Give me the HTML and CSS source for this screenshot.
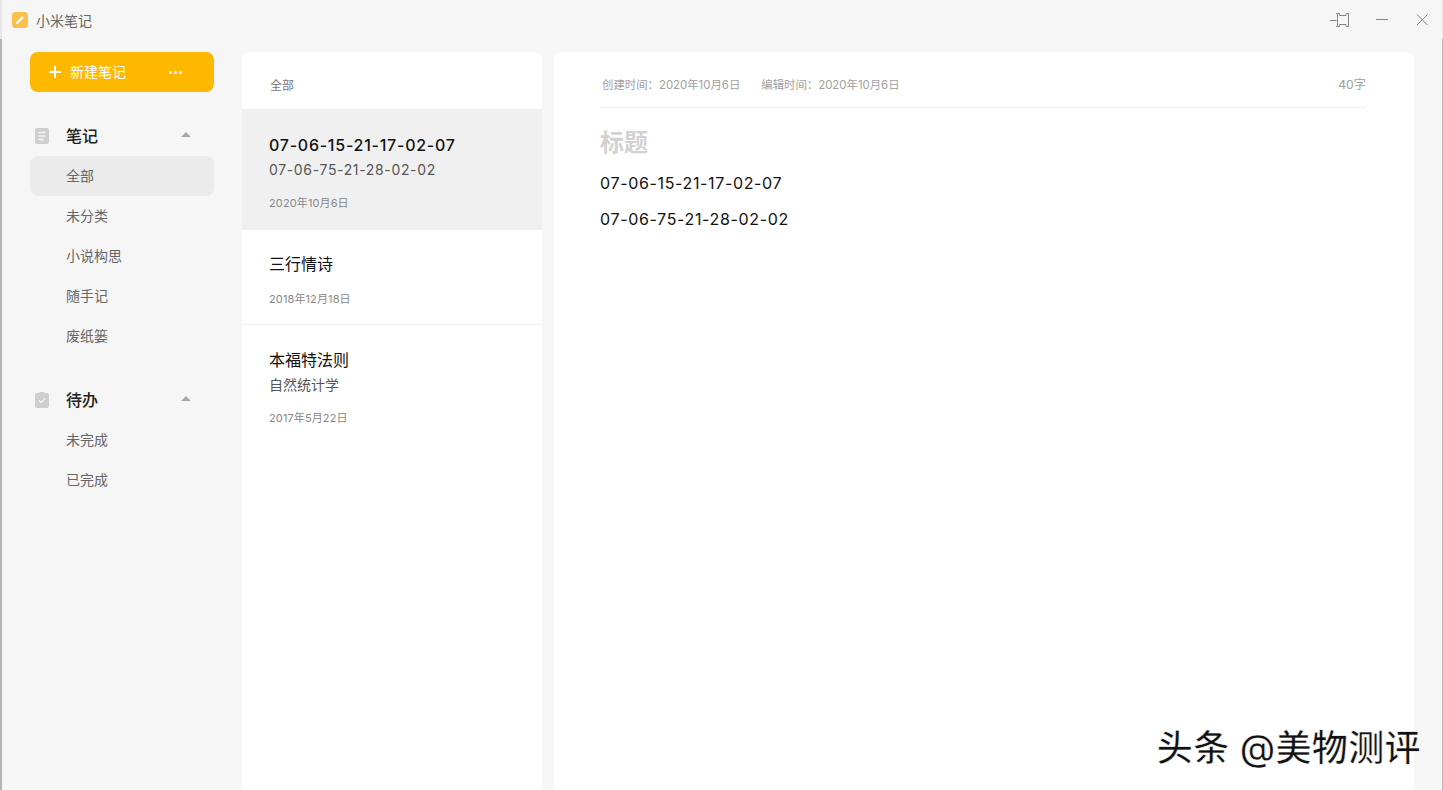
FILE: index.html
```html
<!DOCTYPE html>
<html lang="zh-CN">
<head>
    <meta charset="UTF-8">
    <meta name="viewport" content="width=device-width, initial-scale=1.0">
    <title>小米笔记</title>
    <link rel="stylesheet" href="styles.css">
</head>
<body>
    <div class="window">
        <header class="titlebar">
            <div class="app-name">
                <svg class="app-logo" width="16" height="16" viewBox="0 0 16 16">
                    <rect width="16" height="16" rx="3.5" fill="#fbc04a"/>
                    <path d="M4.5 11.5 L11 5" stroke="#fff" stroke-width="2.4" fill="none"/>
                </svg>
                <span>小米笔记</span>
            </div>
            <div class="window-btns">
                <svg width="20" height="16" viewBox="0 0 20 16" fill="none" stroke="#858585" stroke-width="1">
                    <path d="M1 8.5 H7.5 M7.5 1.5 H10.5 V3.5 H17 V1.5 H19.5 V14.5 H17 V12.5 H10.5 V14.5 H7.5 L8.5 13 V3 Z"/>
                </svg>
                <svg width="14" height="16" viewBox="0 0 14 16" fill="none" stroke="#858585" stroke-width="1">
                    <path d="M1 7.5 H13"/>
                </svg>
                <svg width="14" height="16" viewBox="0 0 14 16" fill="none" stroke="#858585" stroke-width="1">
                    <path d="M2 2.5 L12.5 13 M12.5 2.5 L2 13"/>
                </svg>
            </div>
        </header>

        <main class="content">
            <aside class="sidebar">
                <button class="new-note">
                    <span class="new-left">
                        <svg width="12" height="12" viewBox="0 0 12 12" stroke="#fff" stroke-width="2">
                            <path d="M6 0 V12 M0 6 H12"/>
                        </svg>
                        <span>新建笔记</span>
                    </span>
                    <span class="dots"><i></i><i></i><i></i></span>
                </button>

                <section class="nav-group">
                    <div class="nav-head">
                        <svg width="14" height="16" viewBox="0 0 14 16">
                            <rect width="14" height="16" rx="2" fill="#cfcfcf"/>
                            <path d="M3.5 4.5 H10.5 M3.5 8 H10.5 M3.5 11.5 H8.5" stroke="#f5f5f5" stroke-width="1.5"/>
                        </svg>
                        <span class="nav-title">笔记</span>
                        <span class="caret"></span>
                    </div>
                    <a class="nav-item active">全部</a>
                    <a class="nav-item">未分类</a>
                    <a class="nav-item">小说构思</a>
                    <a class="nav-item">随手记</a>
                    <a class="nav-item">废纸篓</a>
                </section>

                <section class="nav-group">
                    <div class="nav-head">
                        <svg width="14" height="16" viewBox="0 0 14 16">
                            <path d="M2 1 H4 L5 0 H9 L10 1 H12 Q14 1 14 3 V14 Q14 16 12 16 H2 Q0 16 0 14 V3 Q0 1 2 1 Z" fill="#cfcfcf"/>
                            <path d="M4 8.5 L6.2 10.5 L10 6.5" stroke="#f5f5f5" stroke-width="1.4" fill="none"/>
                        </svg>
                        <span class="nav-title">待办</span>
                        <span class="caret"></span>
                    </div>
                    <a class="nav-item">未完成</a>
                    <a class="nav-item">已完成</a>
                </section>
            </aside>

            <section class="note-list">
                <div class="list-head">全部</div>
                <div class="note selected">
                    <div class="note-title digits">07-06-15-21-17-02-07</div>
                    <div class="note-sub digits">07-06-75-21-28-02-02</div>
                    <div class="note-date">2020年10月6日</div>
                </div>
                <div class="note short">
                    <div class="note-title">三行情诗</div>
                    <div class="note-date">2018年12月18日</div>
                </div>
                <div class="note last">
                    <div class="note-title">本福特法则</div>
                    <div class="note-sub">自然统计学</div>
                    <div class="note-date">2017年5月22日</div>
                </div>
            </section>

            <section class="editor">
                <div class="meta">
                    <div class="meta-times">
                        <span>创建时间：2020年10月6日</span>
                        <span>编辑时间：2020年10月6日</span>
                    </div>
                    <span class="word-count">40字</span>
                </div>
                <h1 class="editor-title">标题</h1>
                <p class="editor-line">07-06-15-21-17-02-07</p>
                <p class="editor-line">07-06-75-21-28-02-02</p>
            </section>
        </main>
    </div>
    <div class="watermark">头条 @美物测评</div>
</body>
</html>
```

FILE: styles.css
```css
html, body {
    margin: 0;
    padding: 0;
    height: 100%;
    overflow: hidden;
}

body {
    font-family: Inter, "Noto Sans CJK SC", sans-serif;
    background-color: #f6f6f6;
    color: #333;
}

.window {
    display: flex;
    flex-direction: column;
    height: 790px;
    border-style: solid;
    border-width: 0 1px 0 2px;
    border-image: linear-gradient(#e6e6e6 40px, #b5b5b5 40px) 1;
    box-sizing: border-box;
}

.titlebar {
    display: flex;
    justify-content: space-between;
    align-items: center;
    height: 40px;
    padding: 0 13px 0 10px;
    flex-shrink: 0;
}

.app-name {
    display: flex;
    align-items: center;
    gap: 8px;
    font-size: 14px;
    color: #666;
}

.window-btns {
    display: flex;
    align-items: center;
    gap: 26px;
}

.content {
    display: flex;
    flex: 1;
    min-height: 0;
    padding: 12px 28px 0 28px;
}

.sidebar {
    width: 184px;
    margin-right: 28px;
    flex-shrink: 0;
}

.new-note {
    display: flex;
    justify-content: space-between;
    align-items: center;
    width: 100%;
    height: 40px;
    padding: 0 32px 0 19px;
    background-color: #ffb800;
    color: #fff;
    border: none;
    border-radius: 8px;
    font-family: inherit;
    font-size: 14px;
    line-height: 18px;
    margin-bottom: 24px;
}

.new-left {
    display: flex;
    align-items: center;
    gap: 9px;
}

.dots {
    display: flex;
    gap: 2px;
}

.dots i {
    width: 3px;
    height: 3px;
    border-radius: 50%;
    background: #fff;
}

.nav-group {
    margin-bottom: 24px;
}

.nav-head {
    display: flex;
    align-items: center;
    height: 40px;
    padding-left: 5px;
}

.nav-title {
    margin-left: 17px;
    margin-bottom: 2px;
    font-size: 16px;
    font-weight: 500;
    color: #222;
    flex: 1;
}

.caret {
    width: 0;
    height: 0;
    border-left: 5px solid transparent;
    border-right: 5px solid transparent;
    border-bottom: 5px solid #a8a8a8;
    margin-right: 23px;
    margin-bottom: 3px;
}

.nav-item {
    display: block;
    height: 40px;
    line-height: 40px;
    padding-left: 36px;
    font-size: 14px;
    color: #666;
    border-radius: 8px;
}

.nav-item.active {
    background-color: #ebebeb;
}

.note-list {
    width: 300px;
    margin-right: 12px;
    flex-shrink: 0;
    background: #fff;
    border-radius: 8px 8px 0 0;
}

.list-head {
    height: 57px;
    line-height: 67px;
    padding-left: 28px;
    font-size: 12px;
    color: #777;
}

.note {
    padding: 22px 27px 0;
    height: 97px;
}

.note.selected {
    padding-top: 24px;
    background-color: #f0f0f0;
}

.note.short {
    height: 72px;
    border-bottom: 1px solid #efefef;
}

.note.last {
    padding-top: 23px;
}

.note-title {
    font-size: 16px;
    line-height: 24px;
    color: #111;
}

.note-title.digits {
    font-weight: 500;
    letter-spacing: 0.75px;
}

.note-sub {
    font-size: 14px;
    line-height: 26px;
    color: #555;
}

.note-sub.digits {
    letter-spacing: 0.65px;
}

.note-date {
    font-size: 11px;
    line-height: 16px;
    letter-spacing: 0.12px;
    margin-top: 12px;
    color: #888;
}

.note.short .note-date {
    margin-top: 15px;
}

.editor {
    flex: 1;
    background: #fff;
    border-radius: 8px 8px 0 0;
    padding: 0 48px 0 46px;
}

.meta {
    display: flex;
    justify-content: space-between;
    align-items: center;
    height: 47px;
    padding: 8px 0 0 1px;
    margin-left: 1px;
    font-size: 11.4px;
    color: #a0a0a0;
    border-bottom: 1px solid #efefef;
}

.word-count {
    font-size: 12.2px;
}

.meta-times {
    display: flex;
    gap: 21px;
}

.editor-title {
    margin: 20px 0 0;
    font-size: 24px;
    line-height: 30px;
    font-weight: 700;
    color: #d2d2d2;
}

.editor-line {
    margin: 0;
    font-size: 16px;
    line-height: 36px;
    letter-spacing: 0.65px;
    color: #111;
}

.editor-title + .editor-line {
    margin-top: 7px;
}

.watermark {
    position: absolute;
    right: 22px;
    top: 726px;
    font-size: 36px;
    line-height: 44px;
    letter-spacing: 0.4px;
    font-weight: 500;
    color: #111;
    -webkit-text-stroke: 0.5px #fff;
}
```
